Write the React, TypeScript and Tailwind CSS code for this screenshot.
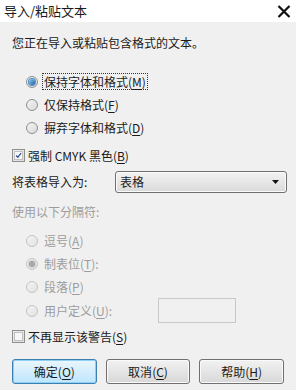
const font = { fontFamily: '"Noto Sans CJK SC", "Noto Sans", sans-serif' };

function Radio({ checked = false, disabled = false }: { checked?: boolean; disabled?: boolean }) {
  return (
    <span
      className={
        "flex h-[12px] w-[12px] shrink-0 items-center justify-center rounded-full border " +
        (disabled
          ? "border-[#c4c4c4] bg-gradient-to-br from-[#f4f4f4] to-[#e2e2e2]"
          : "border-[#8e8f8f] bg-gradient-to-br from-[#f4f4f4] to-[#d9d9d9]")
      }
    >
      {checked && (
        <span
          className={
            "h-[6px] w-[6px] rounded-full " +
            (disabled
              ? "bg-[#a8a8a8] ring-1 ring-[#d0d0d0]"
              : "bg-gradient-to-br from-[#8ad0f6] to-[#1c5c9c] ring-1 ring-[#4a8ac8]")
          }
        />
      )}
    </span>
  );
}

function Check({ checked = false }: { checked?: boolean }) {
  return (
    <span className="flex h-[13px] w-[13px] shrink-0 items-center justify-center border border-[#8e8f8f] bg-gradient-to-br from-[#f0f0f0] to-[#dcdcdc]">
      <span className="flex h-[9px] w-[9px] items-center justify-center border border-[#c0c0c0] bg-[#f8f8f8]">
        {checked && (
          <svg width="9" height="9" viewBox="0 0 9 9">
            <path d="M1.5 4.5 L3.6 6.8 L7.8 1.5" fill="none" stroke="#2a4e8e" strokeWidth="1.6" />
          </svg>
        )}
      </span>
    </span>
  );
}

function U({ children }: { children: string }) {
  return <span className="underline underline-offset-2">{children}</span>;
}

function RadioRow({
  label,
  acc,
  tail = ")",
  checked,
  disabled,
  focus,
}: {
  label: string;
  acc: string;
  tail?: string;
  checked?: boolean;
  disabled?: boolean;
  focus?: boolean;
}) {
  return (
    <div className="flex h-[23px] items-center pl-[26px]">
      <Radio checked={checked} disabled={disabled} />
      <span
        className={
          "ml-[4px] px-[1px] leading-[15px] " +
          (focus ? "border border-dotted border-[#333] " : "border border-transparent ") +
          (disabled ? "text-[#9d9d9d]" : "text-[#1a1a1a]")
        }
      >
        {label}(<U>{acc}</U>
        {tail}
      </span>
    </div>
  );
}

function Button({ label, acc, primary }: { label: string; acc: string; primary?: boolean }) {
  return (
    <button
      className={
        "flex h-[25px] w-[85px] items-center justify-center rounded-[3px] border text-[12px] text-[#1a1a1a] " +
        (primary
          ? "border-[#3c7fb1] bg-gradient-to-b from-[#eaf6fd] to-[#bee6fd] shadow-[inset_0_0_0_1px_#8ed1f5]"
          : "border-[#707070] bg-gradient-to-b from-[#f2f2f2] to-[#d8d8d8] shadow-[inset_0_0_0_1px_#fafafa]")
      }
    >
      {label}(<U>{acc}</U>)
    </button>
  );
}

export default function App() {
  return (
    <div className="h-[390px] w-[296px] overflow-hidden bg-[#f0f0f0] text-[12px]" style={font}>
      {/* Title bar */}
      <div className="flex h-[22px] items-center justify-between bg-white pl-[4px] pr-[5px]">
        <span className="text-[13px] text-[#1a1a1a]">导入/粘贴文本</span>
        <svg width="14" height="13" viewBox="0 0 14 13">
          <path d="M1.5 1 L12.5 12 M12.5 1 L1.5 12" stroke="#111" strokeWidth="2.2" />
        </svg>
      </div>

      <div className="px-[12px]">
        <div className="mt-[11px] flex h-[20px] items-center text-[#1a1a1a]">您正在导入或粘贴包含格式的文本。</div>

        <div className="-mx-[12px] mt-[17px]">
          <RadioRow label="保持字体和格式" acc="M" checked focus />
          <RadioRow label="仅保持格式" acc="F" />
          <RadioRow label="摒弃字体和格式" acc="D" />
        </div>

        <div className="mt-[5px] flex h-[23px] items-center gap-[3px] text-[#1a1a1a]">
          <Check checked />
          <span>
            强制 CMYK 黑色(<U>B</U>)
          </span>
        </div>

        <div className="-mr-[3px] mt-[4px] flex h-[22px] items-center">
          <span className="w-[103px] text-[#1a1a1a]">将表格导入为:</span>
          <div className="flex h-[22px] flex-1 items-center justify-between rounded-[3px] border border-[#707070] bg-gradient-to-b from-[#f3f3f3] to-[#dadada] pl-[4px] pr-[7px] shadow-[inset_0_0_0_1px_#fbfbfb]">
            <span className="text-[#1a1a1a]">表格</span>
            <svg width="7" height="4" viewBox="0 0 7 4">
              <path d="M0 0 H7 L3.5 4 Z" fill="#111" />
            </svg>
          </div>
        </div>

        <div className="mt-[8px] flex h-[22px] items-center text-[#9d9d9d]">使用以下分隔符:</div>

        <div className="-mx-[12px] mt-[6px]">
          <RadioRow label="逗号" acc="A" disabled />
          <RadioRow label="制表位" acc="T" tail="):" checked disabled />
          <RadioRow label="段落" acc="P" disabled />
          <div className="flex items-center">
            <div className="flex-none">
              <RadioRow label="用户定义" acc="U" tail="):" disabled />
            </div>
            <div className="ml-[44px] h-[25px] w-[78px] border border-[#c8c8c8] bg-[#f0f0f0]" />
          </div>
        </div>

        <div className="mt-[2px] flex h-[23px] items-center gap-[3px] text-[#1a1a1a]">
          <Check />
          <span>
            不再显示该警告(<U>S</U>)
          </span>
        </div>

        <div className="mt-[11px] flex gap-[9px]">
          <Button label="确定" acc="O" primary />
          <Button label="取消" acc="C" />
          <Button label="帮助" acc="H" />
        </div>
      </div>
    </div>
  );
}
